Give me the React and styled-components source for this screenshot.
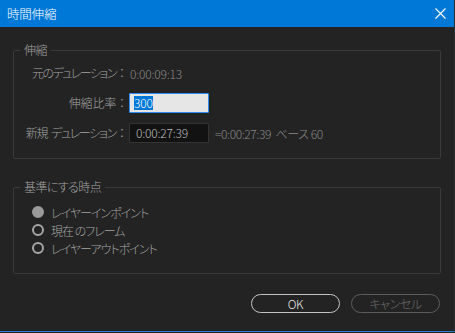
import React from "react";
import styled, { createGlobalStyle } from "styled-components";

const GlobalStyle = createGlobalStyle`
  html, body {
    margin: 0;
    padding: 0;
    background: #232323;
  }
  * {
    box-sizing: border-box;
  }
`;

const Window = styled.div`
  width: 455px;
  height: 332px;
  background: #232323;
  border-right: 1px solid #2f2f2f;
  border-bottom: 1px solid #2a7fd0;
  display: flex;
  flex-direction: column;
  font-family: "Noto Sans CJK JP", "Liberation Sans", sans-serif;
  font-feature-settings: "palt";
  font-weight: 300;
  font-size: 12px;
  letter-spacing: -0.6px;
  color: #a3a3a3;
`;

const TitleBar = styled.div`
  height: 27px;
  flex: none;
  background: #0078d7;
  color: #ffffff;
  display: flex;
  align-items: center;
  justify-content: space-between;
  padding: 0 8px 1px 7px;
  font-size: 12.5px;
  letter-spacing: -0.2px;
`;

const Close = styled.button`
  width: 12px;
  height: 12px;
  padding: 0;
  border: none;
  background: transparent;
  display: flex;
  align-items: center;
  justify-content: center;
`;

const Body = styled.div`
  flex: 1;
  display: flex;
  flex-direction: column;
  padding: 16px 13px 0 13px;
`;

const Group = styled.fieldset`
  margin: 0 0 ${(p) => p.$gap || 0}px 0;
  padding: ${(p) => p.$pad};
  min-width: 0;
  border: 1px solid #3a3a3a;
  border-radius: 2px;
`;

const Legend = styled.legend`
  margin-left: 6px;
  padding: 0 4px;
  line-height: 14px;
  color: #a3a3a3;
`;

const Form = styled.div`
  display: grid;
  grid-template-columns: 114px auto;
  column-gap: 1px;
  row-gap: 10px;
  grid-auto-rows: 20px;
  align-items: center;
`;

const Label = styled.div`
  text-align: right;
  white-space: nowrap;
  line-height: 20px;
  letter-spacing: ${(p) => p.$tight || -0.6}px;
`;

const Gap = styled.span`
  display: inline-block;
  width: 4px;
`;

const Colon = styled.span`
  display: inline-block;
  width: 12px;
  text-align: center;
  letter-spacing: 0;
`;

const Value = styled.div`
  display: flex;
  align-items: center;
  gap: 6px;
  color: #8a8a8a;
  white-space: nowrap;
  letter-spacing: -0.2px;
  padding-left: ${(p) => p.$indent || 0}px;
`;

const Field = styled.div`
  width: 80px;
  height: 20px;
  padding: 0 6px 1px;
  display: flex;
  align-items: center;
  border: 1px solid ${(p) => (p.$active ? "#2d8cf0" : "#343434")};
  background: ${(p) => (p.$active ? "#e6e6e6" : "#121212")};
  color: ${(p) => (p.$active ? "#111" : "#bdbdbd")};
  border-radius: 1px;
`;

const Selected = styled.span`
  background: #0078d7;
  color: #ffffff;
  line-height: 14px;
  margin-left: -2px;
`;

const Result = styled.span`
  letter-spacing: -0.4px;
`;

const RadioList = styled.div`
  display: flex;
  flex-direction: column;
  padding-left: 18px;
`;

const RadioRow = styled.label`
  height: 18px;
  display: flex;
  align-items: center;
  gap: 7px;
  color: #a3a3a3;
  letter-spacing: -1px;
`;

const Dot = styled.span`
  width: 12px;
  height: 12px;
  border-radius: 50%;
  flex: none;
  background: ${(p) => (p.$on ? "#9a9a9a" : "#232323")};
  border: 2px solid ${(p) => (p.$on ? "#9a9a9a" : "#a6a6a6")};
`;

const Buttons = styled.div`
  display: flex;
  justify-content: flex-end;
  gap: 11px;
  margin-right: 1px;
`;

const Button = styled.button`
  width: 89px;
  height: 19px;
  padding: 0 0 1px;
  border-radius: 10px;
  background: transparent;
  font-family: inherit;
  font-feature-settings: "palt";
  font-weight: 300;
  font-size: 12px;
  letter-spacing: -0.4px;
  border: 1px solid ${(p) => (p.$primary ? "#c4c4c4" : "#5c5c5c")};
  color: ${(p) => (p.$primary ? "#e8e8e8" : "#6f6f6f")};
`;

const radios = [
  { label: "レイヤーインポイント", on: true },
  { label: "現在 のフレーム", on: false },
  { label: "レイヤーアウトポイント", on: false },
];

export default function App() {
  return (
    <>
      <GlobalStyle />
      <Window>
        <TitleBar>
          <span>時間伸縮</span>
          <Close aria-label="close">
            <svg width="11" height="11" viewBox="0 0 11 11">
              <path d="M0.5 0.5 L10.5 10.5 M10.5 0.5 L0.5 10.5" stroke="#ffffff" strokeWidth="1.1" />
            </svg>
          </Close>
        </TitleBar>
        <Body>
          <Group $pad="6px 0 15px 0" $gap={21}>
            <Legend>伸縮</Legend>
            <Form>
              <Label $tight={-1.5}>
                元のデュレーション<Colon>：</Colon>
              </Label>
              <Value $indent={1}>0:00:09:13</Value>
              <Label $tight={-0.2}>
                伸縮比率<Colon>：</Colon>
              </Label>
              <Value>
                <Field $active>
                  <Selected>300</Selected>
                </Field>
              </Value>
              <Label $tight={-1.3}>
                新規<Gap />デュレーション<Colon>：</Colon>
              </Label>
              <Value>
                <Field>0:00:27:39</Field>
                <Result>=0:00:27:39&nbsp;&nbsp;ベース 60</Result>
              </Value>
            </Form>
          </Group>
          <Group $pad="9px 0 16px 0" $gap={20}>
            <Legend>基準にする時点</Legend>
            <RadioList>
              {radios.map((r) => (
                <RadioRow key={r.label}>
                  <Dot $on={r.on} />
                  {r.label}
                </RadioRow>
              ))}
            </RadioList>
          </Group>
          <Buttons>
            <Button $primary>OK</Button>
            <Button>キャンセル</Button>
          </Buttons>
        </Body>
      </Window>
    </>
  );
}
